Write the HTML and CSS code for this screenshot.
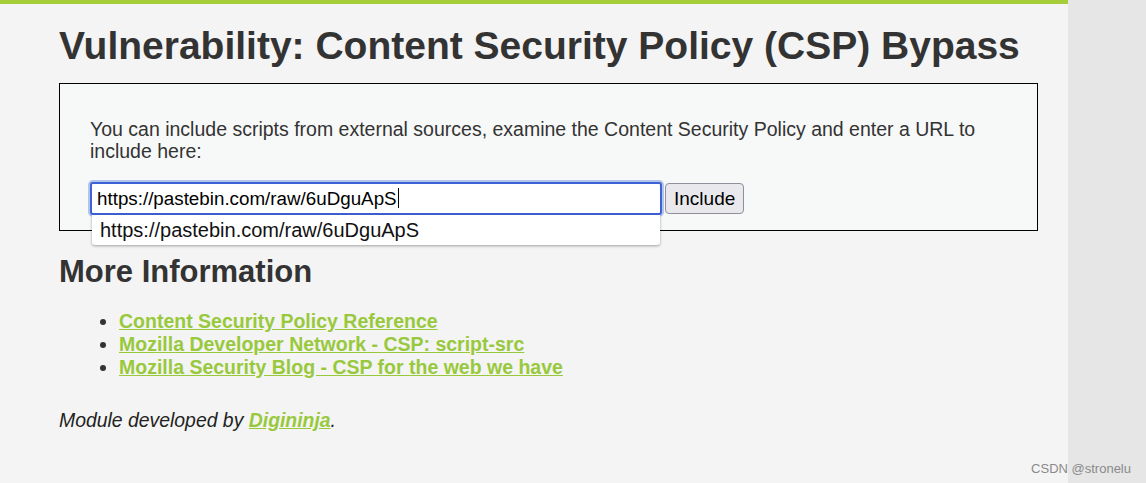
FILE: index.html
```html
<!DOCTYPE html>
<html>
<head>
<meta charset="utf-8">
<link rel="stylesheet" href="styles.css">
</head>
<body>
<div class="page">
  <div class="content">
    <h1 class="title">Vulnerability: Content Security Policy (CSP) Bypass</h1>
    <div class="vuln-box">
      <p class="intro">You can include scripts from external sources, examine the Content Security Policy and enter a URL to include here:</p>
      <div class="form-row">
        <div class="field">
          <div class="input">https://pastebin.com/raw/6uDguApS<span class="caret"></span></div>
          <div class="autocomplete">https://pastebin.com/raw/6uDguApS</div>
        </div>
        <button class="btn">Include</button>
      </div>
    </div>
    <h2 class="subtitle">More Information</h2>
    <ul class="links">
      <li><a href="#">Content Security Policy Reference</a></li>
      <li><a href="#">Mozilla Developer Network - CSP: script-src</a></li>
      <li><a href="#">Mozilla Security Blog - CSP for the web we have</a></li>
    </ul>
    <p class="credit">Module developed by <a href="#">Digininja</a>.</p>
  </div>
</div>
<div class="watermark">CSDN @stronelu</div>
</body>
</html>
```
FILE: styles.css
```css
html, body {
  margin: 0;
  padding: 0;
  height: 100%;
}
body {
  background: #e6e6e6;
  font-family: "Liberation Sans", Arial, sans-serif;
  color: #2f2f2f;
  position: relative;
  overflow: hidden;
}
.page {
  width: 1068px;
  height: 483px;
  background: #f4f4f4;
  border-top: 4px solid #a6ce39;
  box-sizing: border-box;
}
.content {
  padding: 20px 30px 0 59px;
  width: 979px;
}
.title {
  margin: 0;
  font-size: 39px;
  font-weight: bold;
  line-height: 44px;
  color: #333;
}
.vuln-box {
  margin-top: 15px;
  border: 1px solid #000;
  background: #f7f8f8;
  padding: 34px 30px 15px 30px;
  height: 148px;
  box-sizing: border-box;
}
.intro {
  margin: 0;
  font-size: 19.5px;
  line-height: 22px;
  color: #333;
}
.form-row {
  margin-top: 20px;
  display: flex;
  align-items: flex-start;
  gap: 3px;
}
.field {
  position: relative;
  width: 572px;
}
.input {
  height: 33px;
  box-sizing: border-box;
  border: 2px solid #3d62d6;
  border-radius: 3px;
  box-shadow: 0 0 0 2px #b3c5ea;
  background: #fff;
  font-size: 18.8px;
  line-height: 29px;
  padding-left: 5px;
  color: #000;
}
.caret {
  display: inline-block;
  width: 1px;
  height: 20px;
  background: #000;
  vertical-align: -3px;
  margin-left: 1px;
}
.autocomplete {
  position: absolute;
  left: 2px;
  top: 33px;
  width: 568px;
  height: 30px;
  box-sizing: border-box;
  background: #fff;
  box-shadow: 0 1px 3px rgba(0,0,0,0.35);
  border-radius: 0 0 3px 3px;
  font-size: 20px;
  line-height: 30px;
  padding-left: 8px;
  color: #111;
  z-index: 2;
}
.btn {
  margin-top: 1px;
  height: 31px;
  padding: 0 8px;
  border: 1px solid #8f8f9d;
  border-radius: 4px;
  background: #e9e9ed;
  font-family: "Liberation Sans", Arial, sans-serif;
  font-size: 19px;
  color: #000;
}
.subtitle {
  margin: 24px 0 0 0;
  font-size: 31px;
  line-height: 34px;
  font-weight: bold;
  color: #333;
}
.links {
  margin: 21px 0 0 0;
  padding-left: 60px;
  font-size: 19.5px;
  line-height: 23px;
  font-weight: bold;
}
.links li::marker {
  color: #333;
}
.links a, .credit a {
  color: #98c93c;
  text-decoration: underline;
}
.credit {
  margin: 30px 0 0 0;
  font-size: 19.4px;
  line-height: 23px;
  font-style: italic;
  color: #222;
}
.credit a {
  font-weight: bold;
}
.watermark {
  position: absolute;
  right: 15px;
  bottom: 7px;
  font-size: 13px;
  color: #8a8a8a;
}
```
